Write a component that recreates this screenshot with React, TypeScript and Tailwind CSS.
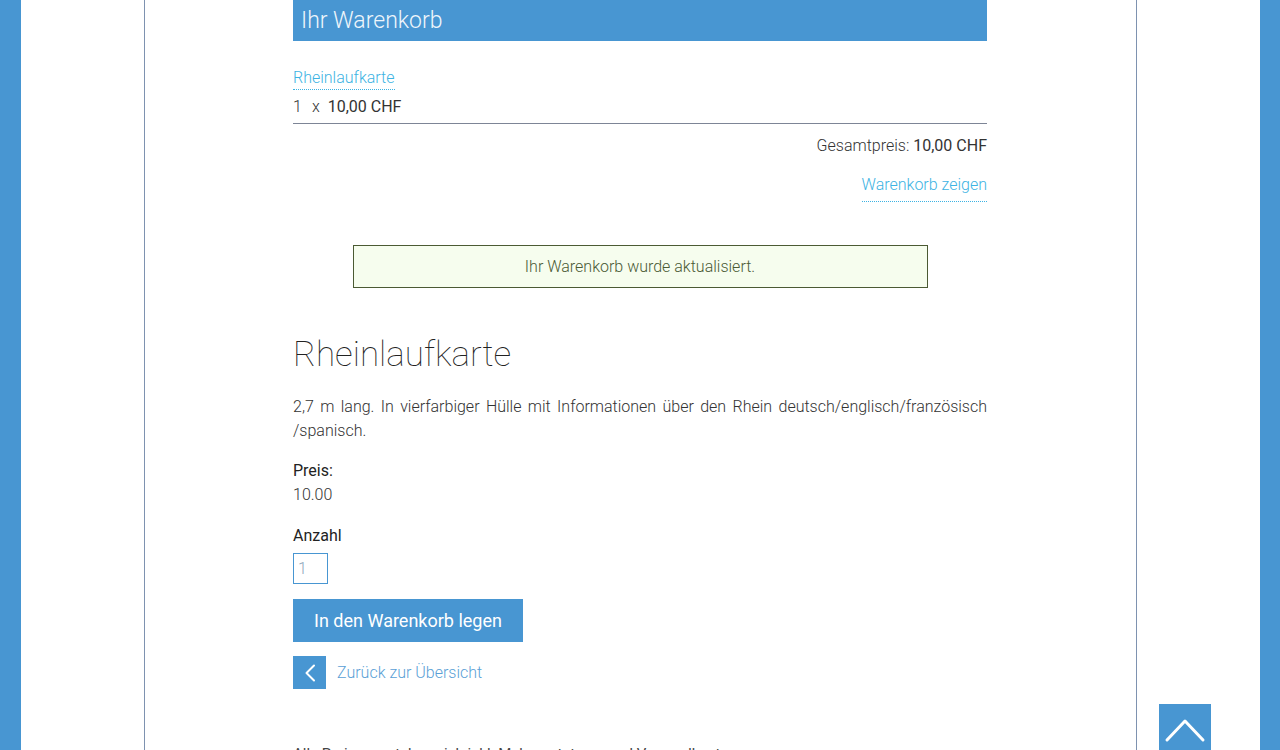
import React from 'react';

const BLUE = 'bg-[#4896d2]';

export default function App() {
  return (
    <div className="flex min-h-[750px] font-['Roboto',sans-serif] text-[#333]">
      {/* left band */}
      <div className={`w-[21px] shrink-0 ${BLUE}`} />

      <div className="flex-1 bg-white">
        <div className="mx-auto w-[993px] min-h-[800px] border-x border-[#7e92b0]">
          <div className="ml-[148px] w-[694px]">
            {/* Cart header */}
            <div className={`h-[41px] ${BLUE} pl-[8px] text-[23px] font-light leading-[41px] text-[#eef5fb]`}>
              Ihr Warenkorb
            </div>

            <div className="mt-[25px]">
              <a className="inline-block border-b border-dotted border-[#3db3e3] text-[16px] font-light leading-[22px] text-[#3db3e3]">
                Rheinlaufkarte
              </a>
            </div>
            <div className="mt-[5px] border-b border-[#7d8596] pb-[4px] text-[16px] leading-[24px]">
              <span className="font-light">1</span>
              <span className="ml-[10px] font-light">x</span>
              <span className="ml-[8px]">10,00 CHF</span>
            </div>

            <div className="mt-[10px] text-right text-[16px] leading-[24px]">
              <span className="font-light">Gesamtpreis:</span> <span>10,00 CHF</span>
            </div>
            <div className="mt-[15px] text-right">
              <a className="inline-block border-b border-dotted border-[#3db3e3] pb-[5px] text-[16px] font-light leading-[22px] text-[#3db3e3]">
                Warenkorb zeigen
              </a>
            </div>

            {/* status message */}
            <div className="mx-auto mt-[43px] flex h-[43px] w-[575px] items-center justify-center border border-[#4b5a33] bg-[#f6fdee] text-[16px] font-light text-[#4a5a35]">
              Ihr Warenkorb wurde aktualisiert.
            </div>

            {/* product */}
            <h1 className="mt-[45px] text-[35px] font-thin leading-[44px] text-[#222]">Rheinlaufkarte</h1>
            <p className="mt-[18px] text-justify text-[16px] font-light leading-[24px]">
              2,7 m lang. In vierfarbiger Hülle mit Informationen über den Rhein deutsch/englisch/französisch /spanisch.
            </p>

            <div className="mt-[16px] text-[16px] leading-[24px]">
              <div className="text-[#222]">Preis:</div>
              <div className="font-light">10.00</div>
            </div>

            <div className="mt-[17px] text-[16px] leading-[24px] text-[#222]">Anzahl</div>
            <input
              defaultValue="1"
              className="mt-[5px] block h-[31px] w-[35px] border border-solid border-[#4896d2] px-[4px] text-[16px] font-light text-[#8fa6bb] outline-none"
            />

            <button className={`mt-[15px] block h-[43px] w-[230px] ${BLUE} text-[18px] text-white`}>
              In den Warenkorb legen
            </button>

            <div className="mt-[14px] flex items-center">
              <span className={`flex h-[33px] w-[33px] items-center justify-center ${BLUE}`}>
                <svg width="12" height="18" viewBox="0 0 12 18" fill="none">
                  <polyline points="10,1.5 2.5,9 10,16.5" stroke="white" strokeWidth="2" strokeLinecap="round" strokeLinejoin="round" />
                </svg>
              </span>
              <a className="ml-[11px] text-[16px] font-light text-[#5a9fd6]">Zurück zur Übersicht</a>
            </div>

            <p className="mt-[53px] text-[15px] leading-[24px] text-[#444]">
              Alle Preise verstehen sich inkl. Mehrwertsteuer und Versandkosten.
            </p>
          </div>
        </div>
      </div>

      {/* right band */}
      <div className={`w-[20px] shrink-0 ${BLUE}`} />

      {/* scroll to top */}
      <div className={`fixed left-[1159px] top-[704px] flex h-[52px] w-[52px] items-start justify-center ${BLUE}`}>
        <svg width="52" height="46" viewBox="0 0 52 46" fill="none">
          <polyline points="8,36 26,17 44,36" stroke="white" strokeWidth="3" strokeLinecap="round" strokeLinejoin="round" />
        </svg>
      </div>
    </div>
  );
}
